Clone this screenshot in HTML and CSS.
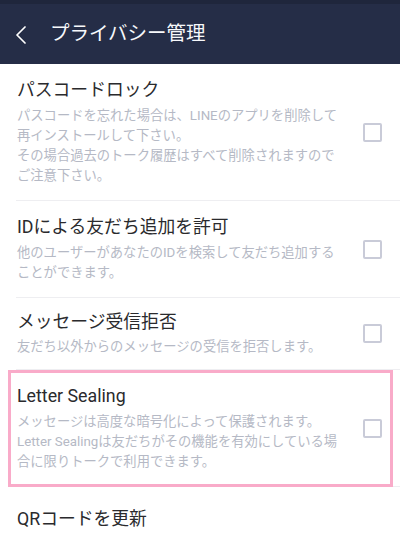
FILE: index.html
```html
<!DOCTYPE html>
<html lang="ja">
<head>
<meta charset="utf-8">
<title>プライバシー管理</title>
<link rel="stylesheet" href="styles.css">
</head>
<body>
<div class="screen">
  <div class="statusbar"></div>
  <header class="appbar">
    <svg class="back" width="12" height="18" viewBox="0 0 12 18" aria-hidden="true">
      <path d="M10 1 L2 9 L10 17" fill="none" stroke="#ffffff" stroke-width="1.7" stroke-linecap="round" stroke-linejoin="round"/>
    </svg>
    <h1 class="appbar-title">プライバシー管理</h1>
  </header>
  <ul class="list">
    <li class="item">
      <div class="text">
        <div class="title">パスコードロック</div>
        <div class="desc">パスコードを忘れた場合は、LINEのアプリを削除して再インストールして下さい。<br>その場合過去のトーク履歴はすべて削除されますのでご注意下さい。</div>
      </div>
      <span class="checkbox"></span>
    </li>
    <li class="item">
      <div class="text">
        <div class="title">IDによる友だち追加を許可</div>
        <div class="desc">他のユーザーがあなたのIDを検索して友だち追加することができます。</div>
      </div>
      <span class="checkbox"></span>
    </li>
    <li class="item item-tight">
      <div class="text">
        <div class="title">メッセージ受信拒否</div>
        <div class="desc">友だち以外からのメッセージの受信を拒否します。</div>
      </div>
      <span class="checkbox"></span>
    </li>
    <li class="item item-highlight">
      <div class="text">
        <div class="title">Letter Sealing</div>
        <div class="desc">メッセージは高度な暗号化によって保護されます。<br>Letter Sealingは友だちがその機能を有効にしている場合に限りトークで利用できます。</div>
      </div>
      <span class="checkbox"></span>
    </li>
    <li class="item item-single">
      <div class="text">
        <div class="title">QRコードを更新</div>
      </div>
    </li>
  </ul>
</div>
</body>
</html>
```

FILE: styles.css
```css
* {
  box-sizing: border-box;
}

html, body {
  margin: 0;
  padding: 0;
  background: #ffffff;
}

body {
  font-family: Roboto, "Noto Sans CJK JP", "Noto Sans", sans-serif;
  overflow: hidden;
}

.screen {
  width: 400px;
  height: 542px;
  overflow: hidden;
  background: #ffffff;
}

.statusbar {
  height: 4px;
  background: #1f263c;
}

.appbar {
  height: 60px;
  background: #252d47;
  display: flex;
  align-items: center;
  padding-left: 15px;
  padding-bottom: 1px;
}

.back {
  display: block;
  flex: none;
  margin-top: 3px;
}

.appbar-title {
  margin: 0 0 0 23px;
  font-size: 19.5px;
  font-weight: 400;
  color: #f7f8fb;
  line-height: 24px;
}

.list {
  list-style: none;
  margin: 0;
  padding: 0;
}

.item {
  position: relative;
  display: flex;
  align-items: center;
  margin-left: 16px;
  padding: 14px 18px 14px 1px;
  border-bottom: 1px solid #eeeef1;
}

.item-tight {
  padding-top: 12px;
  padding-bottom: 12px;
}

.item-tight .desc {
  margin-top: 3px;
}

.item-single {
  min-height: 64px;
  padding-top: 0;
  padding-bottom: 0;
  border-bottom: none;
}

.item-highlight::before {
  content: "";
  position: absolute;
  left: -8px;
  right: 7px;
  top: 0;
  bottom: -1px;
  border: 3px solid #f9abc9;
  pointer-events: none;
}

.text {
  flex: 1;
  min-width: 0;
  padding-right: 22px;
}

.title {
  font-size: 17.8px;
  line-height: 24px;
  color: #2a2a2d;
}

.desc {
  margin-top: 4px;
  font-size: 13.3px;
  line-height: 20px;
  color: #b5b9c5;
}

.checkbox {
  flex: none;
  width: 19px;
  height: 19px;
  border: 2px solid #c9cbd8;
  border-radius: 2px;
}
```
